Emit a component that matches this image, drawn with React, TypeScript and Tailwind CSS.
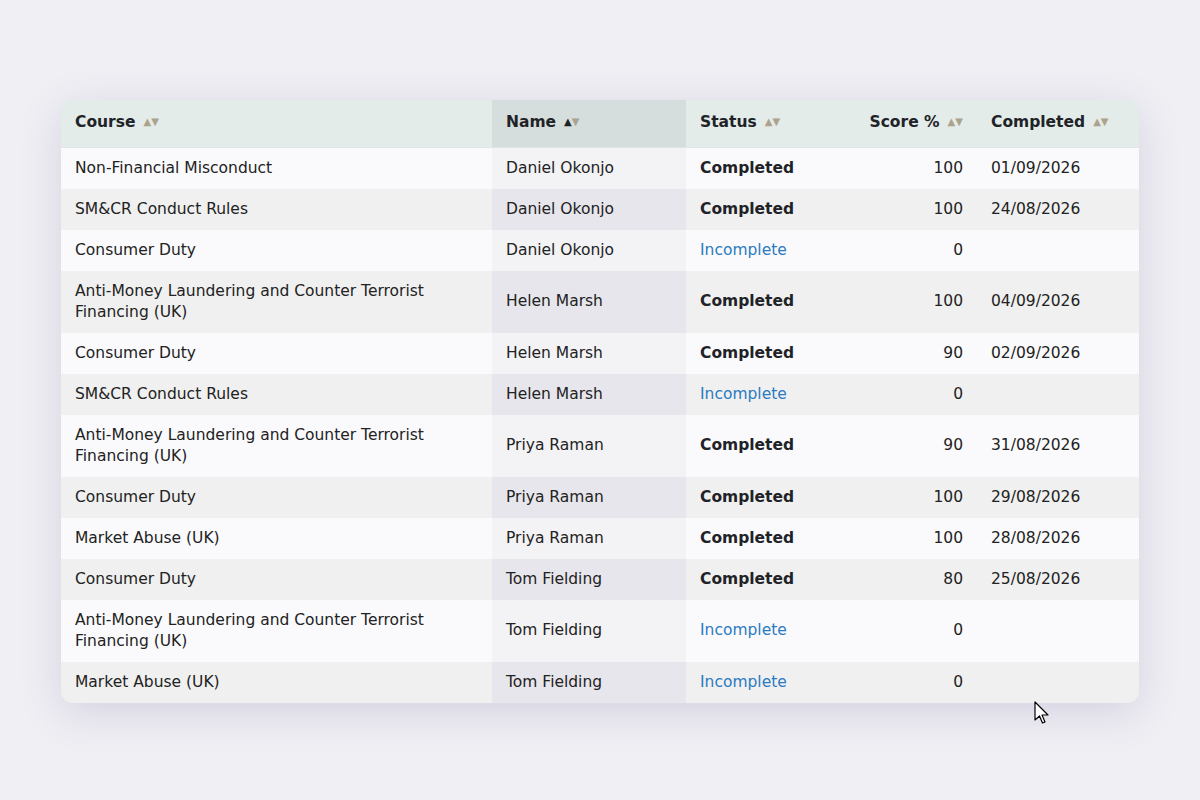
import React from "react";

const rows: [string, string, boolean, number, string][] = [
  ["Non-Financial Misconduct", "Daniel Okonjo", true, 100, "01/09/2026"],
  ["SM&CR Conduct Rules", "Daniel Okonjo", true, 100, "24/08/2026"],
  ["Consumer Duty", "Daniel Okonjo", false, 0, ""],
  ["Anti-Money Laundering and Counter Terrorist Financing (UK)", "Helen Marsh", true, 100, "04/09/2026"],
  ["Consumer Duty", "Helen Marsh", true, 90, "02/09/2026"],
  ["SM&CR Conduct Rules", "Helen Marsh", false, 0, ""],
  ["Anti-Money Laundering and Counter Terrorist Financing (UK)", "Priya Raman", true, 90, "31/08/2026"],
  ["Consumer Duty", "Priya Raman", true, 100, "29/08/2026"],
  ["Market Abuse (UK)", "Priya Raman", true, 100, "28/08/2026"],
  ["Consumer Duty", "Tom Fielding", true, 80, "25/08/2026"],
  ["Anti-Money Laundering and Counter Terrorist Financing (UK)", "Tom Fielding", false, 0, ""],
  ["Market Abuse (UK)", "Tom Fielding", false, 0, ""],
];

function Sort({ active }: { active?: boolean }) {
  return (
    <span className="ml-[8px] inline-flex text-[10px] leading-none align-middle">
      <span className={active ? "text-[#1f2328]" : "text-[#ada28c]"}>▲</span>
      <span className="text-[#ada28c]">▼</span>
    </span>
  );
}

export default function App() {
  return (
    <div className="relative w-[1200px] h-[800px] bg-[#f0eff4] pt-[100px] pl-[61px]" style={{ fontFamily: '"DejaVu Sans", sans-serif' }}>
      <div className="w-[1078px] rounded-[12px] overflow-hidden shadow-[0_10px_40px_rgba(90,80,140,0.18)]">
        <table className="w-full border-collapse table-fixed text-[15.5px] leading-[21px] text-[#222]">
          <colgroup>
            <col className="w-[431px]" />
            <col className="w-[194px]" />
            <col className="w-[155px]" />
            <col className="w-[136px]" />
            <col className="w-[162px]" />
          </colgroup>
          <thead>
            <tr className="h-[47px] bg-[#e3ece8] text-left font-bold text-[#1f2328] border-b border-[#e0e6e4]">
              <th className="px-[14px] pb-[2px]">Course<Sort /></th>
              <th className="px-[14px] pb-[2px] bg-[#d5dedc]">Name<Sort active /></th>
              <th className="px-[14px] pb-[2px]">Status<Sort /></th>
              <th className="px-[14px] pb-[2px] text-right">Score %<Sort /></th>
              <th className="px-[14px] pb-[2px]">Completed<Sort /></th>
            </tr>
          </thead>
          <tbody>
            {rows.map((r, i) => {
              const odd = i % 2 === 1;
              return (
                <tr key={i} className={odd ? "bg-[#f0f0f0]" : "bg-[#fafafc]"}>
                  <td className="px-[14px] py-[10px]">{r[0]}</td>
                  <td className={`px-[14px] py-[10px] ${odd ? "bg-[#e7e6ec]" : "bg-[#f3f3f6]"}`}>{r[1]}</td>
                  <td className="px-[14px] py-[10px]">
                    {r[2] ? <span className="font-bold text-[#1f2328]">Completed</span> : <span className="text-[#2b7bc0]">Incomplete</span>}
                  </td>
                  <td className="px-[14px] py-[10px] text-right">{r[3]}</td>
                  <td className="px-[14px] py-[10px]">{r[4]}</td>
                </tr>
              );
            })}
          </tbody>
        </table>
      </div>
      <svg className="absolute left-[1034px] top-[701px]" width="18" height="24" viewBox="0 0 18 24">
        <path d="M1 1 L1 19 L5.5 15 L8.5 22 L11 21 L8 14 L14 14 Z" fill="#fff" stroke="#000" strokeWidth="1.2" strokeLinejoin="round" />
      </svg>
    </div>
  );
}
